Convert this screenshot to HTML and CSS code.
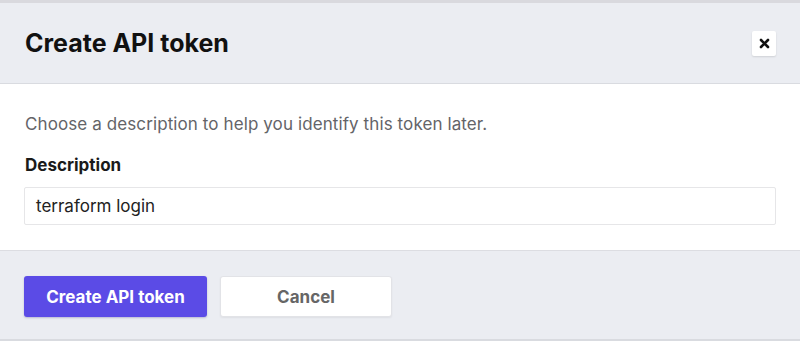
FILE: index.html
```html
<!DOCTYPE html>
<html>
<head>
<meta charset="utf-8">
<link rel="stylesheet" href="styles.css">
</head>
<body>
<div class="modal">
  <div class="modal-header">
    <h1 class="title">Create API token</h1>
    <button class="close" aria-label="Close">
      <svg width="11" height="11" viewBox="0 0 11 11"><path d="M2 2 L9 9 M9 2 L2 9" stroke="#111" stroke-width="2.6" stroke-linecap="round"/></svg>
    </button>
  </div>
  <div class="modal-body">
    <p class="hint">Choose a description to help you identify this token later.</p>
    <label class="label">Description</label>
    <div class="input">terraform login</div>
  </div>
  <div class="modal-footer">
    <button class="btn btn-primary">Create API token</button>
    <button class="btn btn-secondary">Cancel</button>
  </div>
</div>
</body>
</html>
```
FILE: styles.css
```css
* { box-sizing: border-box; }
html, body { margin: 0; padding: 0; background: #fff; }
body { font-family: Inter, "Liberation Sans", Arial, sans-serif; color: #1a1a1a; }
.modal {
  width: 800px;
  height: 341px;
  border-top: 3px solid #d9d9de;
  display: flex;
  flex-direction: column;
}
.modal-header {
  height: 81px;
  flex: none;
  background: #ebedf2;
  border-bottom: 1px solid #d9dbe0;
  display: flex;
  align-items: center;
  justify-content: space-between;
  padding: 0 24px 0 25px;
}
.title {
  margin: 0;
  font-size: 25px;
  font-weight: 700;
  color: #111;
  letter-spacing: 0;
}
.close {
  width: 24px;
  height: 25px;
  background: #fff;
  border: none;
  border-radius: 2px;
  box-shadow: 0 1px 2px rgba(0,0,0,0.12);
  display: flex;
  align-items: center;
  justify-content: center;
  padding: 0;
}
.modal-body {
  height: 166px;
  flex: none;
  background: #fff;
  padding: 29px 24px 0 24px;
}
.hint {
  margin: 0 0 0 1px;
  font-size: 17px;
  color: #646468;
  line-height: 22px;
  letter-spacing: 0.1px;
}
.label {
  display: block;
  margin: 19px 0 0 1px;
  font-size: 17px;
  font-weight: 700;
  color: #1a1a1a;
  line-height: 22px;
}
.input {
  margin-top: 11px;
  width: 752px;
  height: 38px;
  border: 1px solid #e6e6e8;
  border-radius: 2px;
  padding: 0 11px;
  font-size: 17px;
  line-height: 36px;
  color: #222;
}
.modal-footer {
  flex: 1;
  background: #ebedf2;
  border-top: 1px solid #dcdde2;
  border-bottom: 2px solid #d9dbe0;
  display: flex;
  align-items: flex-start;
  gap: 13px;
  padding: 25px 24px 0 24px;
}
.btn {
  height: 41px;
  border-radius: 3px;
  font-family: inherit;
  font-size: 17px;
  font-weight: 700;
  cursor: pointer;
  padding: 0;
}
.btn-primary {
  width: 183px;
  background: #5b4be6;
  color: #fff;
  border: none;
  box-shadow: 0 1px 2px rgba(40,30,120,0.25);
}
.btn-secondary {
  width: 172px;
  background: #fff;
  color: #666;
  border: 1px solid #e2e3e7;
  box-shadow: 0 1px 2px rgba(0,0,0,0.06);
}
```
